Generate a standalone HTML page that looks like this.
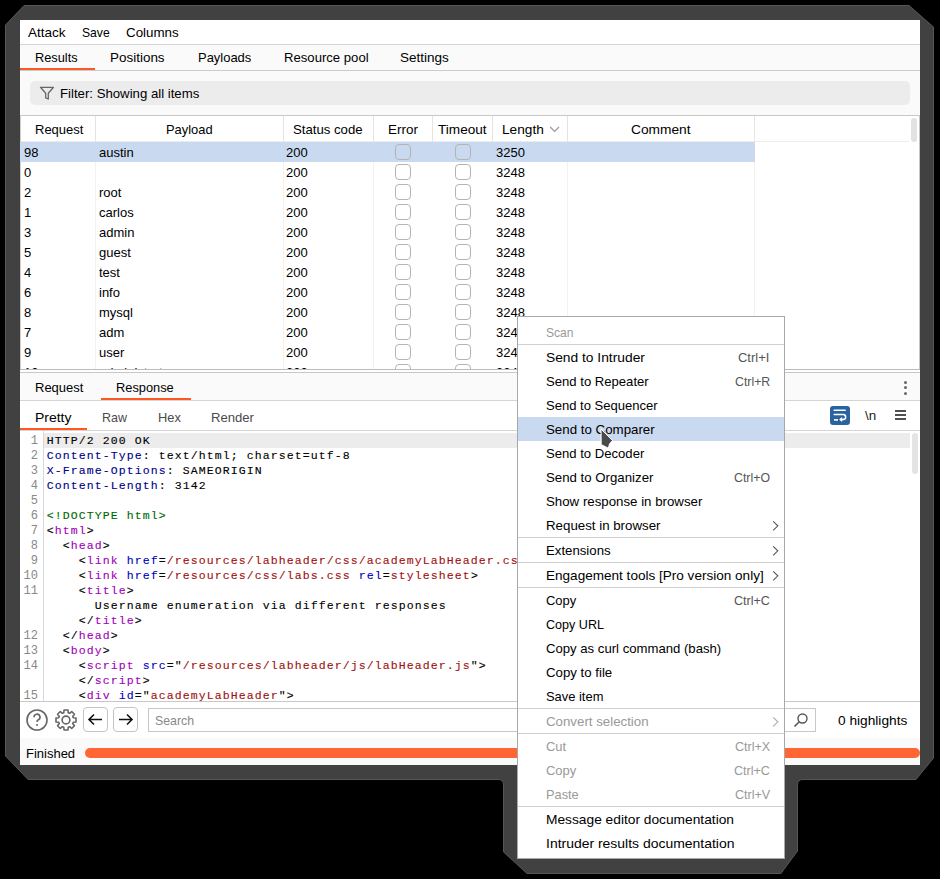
<!DOCTYPE html><html><head><meta charset="utf-8"><style>
*{margin:0;padding:0;box-sizing:border-box}
html,body{width:940px;height:879px;overflow:hidden;background:#000}
body{position:relative;font-family:"Liberation Sans", sans-serif;font-size:13px}
.t{position:absolute;white-space:pre;line-height:16px;font-family:"Liberation Sans", sans-serif;font-size:13px}
.r{position:absolute}
.code{position:absolute;margin-top:0px;left:46.7px;font-family:"Liberation Mono", monospace;font-size:11.5px;letter-spacing:1.1px;line-height:15px;white-space:pre;color:#000;-webkit-text-stroke:0.12px}
.ln{position:absolute;margin-top:1px;font-family:"Liberation Mono", monospace;font-size:12px;line-height:15px;color:#888;text-align:right;width:20px;left:18px;white-space:pre}
</style></head><body>
<svg style="position:absolute;left:0;top:0" width="940" height="879" viewBox="0 0 940 879"><path d="M5.5,25 L24,5.5 L909,5.5 L933.5,27 L933.5,758 L916,779.5 L803,779.5 Q797.5,779.5 797.5,785 L797.5,851 L781,873.5 L527,873.5 L503.5,852 L503.5,785 Q503.5,779.5 498,779.5 L28,779.5 L5.5,756 Z" fill="#414141" stroke="#565656" stroke-width="1"/></svg>
<div class="r" style="left:20px;top:20px;width:900px;height:745px;background:#fff;"></div>
<div class="t " style="left:28px;top:25.0px;color:#000;transform:scaleX(1.0408);transform-origin:0 0;">Attack</div>
<div class="t " style="left:82.3px;top:25.0px;color:#000;transform:scaleX(0.9345);transform-origin:0 0;">Save</div>
<div class="t " style="left:126.3px;top:25.0px;color:#000;transform:scaleX(1.0274);transform-origin:0 0;">Columns</div>
<div class="r" style="left:20px;top:44px;width:900px;height:1px;background:#d4d4d4;"></div>
<div class="r" style="left:20px;top:45px;width:900px;height:25px;background:#fafafa;"></div>
<div class="t " style="left:35.3px;top:50.0px;color:#000;transform:scaleX(0.9825);transform-origin:0 0;">Results</div>
<div class="t " style="left:110.4px;top:50.0px;color:#000;transform:scaleX(1.0351);transform-origin:0 0;">Positions</div>
<div class="t " style="left:197.6px;top:50.0px;color:#000;transform:scaleX(0.9966);transform-origin:0 0;">Payloads</div>
<div class="t " style="left:283.7px;top:50.0px;color:#000;transform:scaleX(1.0092);transform-origin:0 0;">Resource pool</div>
<div class="t " style="left:400.2px;top:50.0px;color:#000;transform:scaleX(1.0386);transform-origin:0 0;">Settings</div>
<div class="r" style="left:20px;top:68px;width:75px;height:2px;background:#ff5722;"></div>
<div class="r" style="left:20px;top:70px;width:900px;height:1px;background:#c8cccc;"></div>
<div class="r" style="left:20px;top:71px;width:900px;height:44px;background:#fafafa;"></div>
<div class="r" style="left:30px;top:81px;width:880px;height:24px;background:#ececec;border-radius:5px;"></div>
<svg style="position:absolute;left:39px;top:85px" width="16" height="16" viewBox="0 0 16 16"><path d="M1.5 2.3 H14.5 L9.3 8.3 V14 L6.7 12.8 V8.3 Z" fill="none" stroke="#666" stroke-width="1.3" stroke-linejoin="round"/></svg>
<div class="t " style="left:59.7px;top:86.0px;color:#000;transform:scaleX(1.0147);transform-origin:0 0;">Filter: Showing all items</div>
<div class="r" style="left:20px;top:115px;width:900px;height:1px;background:#c8c8c8;"></div>
<div class="r" style="left:20px;top:116px;width:891px;height:253px;background:#fff;"></div>
<div class="r" style="left:95px;top:116px;width:1px;height:26px;background:#e4e4e4;"></div>
<div class="r" style="left:283px;top:116px;width:1px;height:26px;background:#e4e4e4;"></div>
<div class="r" style="left:373px;top:116px;width:1px;height:26px;background:#e4e4e4;"></div>
<div class="r" style="left:432px;top:116px;width:1px;height:26px;background:#e4e4e4;"></div>
<div class="r" style="left:492px;top:116px;width:1px;height:26px;background:#e4e4e4;"></div>
<div class="r" style="left:567px;top:116px;width:1px;height:26px;background:#e4e4e4;"></div>
<div class="r" style="left:754px;top:116px;width:1px;height:26px;background:#e4e4e4;"></div>
<div class="t " style="left:35px;top:122.0px;color:#000;transform:scaleX(0.9995);transform-origin:0 0;">Request</div>
<div class="t " style="left:165.6px;top:122.0px;color:#000;transform:scaleX(0.9918);transform-origin:0 0;">Payload</div>
<div class="t " style="left:293.3px;top:122.0px;color:#000;transform:scaleX(1.0137);transform-origin:0 0;">Status code</div>
<div class="t " style="left:388px;top:122.0px;color:#000;transform:scaleX(1.0349);transform-origin:0 0;">Error</div>
<div class="t " style="left:438.4px;top:122.0px;color:#000;transform:scaleX(1.0455);transform-origin:0 0;">Timeout</div>
<div class="t " style="left:502.4px;top:122.0px;color:#000;transform:scaleX(1.0512);transform-origin:0 0;">Length</div>
<div class="t " style="left:630.9px;top:122.0px;color:#000;transform:scaleX(1.0575);transform-origin:0 0;">Comment</div>
<svg style="position:absolute;left:549px;top:125px" width="11" height="9" viewBox="0 0 11 9"><path d="M1.2 2 L5.6 6.5 L10 2" fill="none" stroke="#999" stroke-width="1.2"/></svg>
<div class="r" style="left:20px;top:141px;width:889px;height:1px;background:#ececec;"></div>
<div class="r" style="left:20px;top:116px;width:1px;height:253px;background:#d0cccc;"></div>
<div class="r" style="left:911px;top:118px;width:6px;height:24px;background:#e2e2e2;border-radius:3px;"></div>
<div class="r" style="left:919px;top:116px;width:1px;height:253px;background:#c8c4c4;"></div>
<div style="position:absolute;left:20px;top:142px;width:891px;height:227px;overflow:hidden">
<div class="r" style="left:75px;top:0;width:1px;height:227px;background:#f2f2f2"></div>
<div class="r" style="left:263px;top:0;width:1px;height:227px;background:#f2f2f2"></div>
<div class="r" style="left:353px;top:0;width:1px;height:227px;background:#f2f2f2"></div>
<div class="r" style="left:547px;top:0;width:1px;height:227px;background:#f2f2f2"></div>
<div class="r" style="left:734px;top:0;width:1px;height:227px;background:#f2f2f2"></div>
<div class="r" style="left:0;top:0;width:735px;height:20px;background:#c9d9ef"></div>
<div class="t" style="left:4px;top:3px">98</div>
<div class="t" style="left:79px;top:3px">austin</div>
<div class="t" style="left:266px;top:3px">200</div>
<div class="t" style="left:476px;top:3px">3250</div>
<div class="r" style="left:375px;top:2px;width:16px;height:16px;border:1px solid #b4b4b4;border-radius:4px;background:transparent"></div>
<div class="r" style="left:435px;top:2px;width:16px;height:16px;border:1px solid #b4b4b4;border-radius:4px;background:transparent"></div>
<div class="t" style="left:4px;top:23px">0</div>
<div class="t" style="left:79px;top:23px"></div>
<div class="t" style="left:266px;top:23px">200</div>
<div class="t" style="left:476px;top:23px">3248</div>
<div class="r" style="left:375px;top:22px;width:16px;height:16px;border:1px solid #b4b4b4;border-radius:4px;background:transparent"></div>
<div class="r" style="left:435px;top:22px;width:16px;height:16px;border:1px solid #b4b4b4;border-radius:4px;background:transparent"></div>
<div class="t" style="left:4px;top:43px">2</div>
<div class="t" style="left:79px;top:43px">root</div>
<div class="t" style="left:266px;top:43px">200</div>
<div class="t" style="left:476px;top:43px">3248</div>
<div class="r" style="left:375px;top:42px;width:16px;height:16px;border:1px solid #b4b4b4;border-radius:4px;background:transparent"></div>
<div class="r" style="left:435px;top:42px;width:16px;height:16px;border:1px solid #b4b4b4;border-radius:4px;background:transparent"></div>
<div class="t" style="left:4px;top:63px">1</div>
<div class="t" style="left:79px;top:63px">carlos</div>
<div class="t" style="left:266px;top:63px">200</div>
<div class="t" style="left:476px;top:63px">3248</div>
<div class="r" style="left:375px;top:62px;width:16px;height:16px;border:1px solid #b4b4b4;border-radius:4px;background:transparent"></div>
<div class="r" style="left:435px;top:62px;width:16px;height:16px;border:1px solid #b4b4b4;border-radius:4px;background:transparent"></div>
<div class="t" style="left:4px;top:83px">3</div>
<div class="t" style="left:79px;top:83px">admin</div>
<div class="t" style="left:266px;top:83px">200</div>
<div class="t" style="left:476px;top:83px">3248</div>
<div class="r" style="left:375px;top:82px;width:16px;height:16px;border:1px solid #b4b4b4;border-radius:4px;background:transparent"></div>
<div class="r" style="left:435px;top:82px;width:16px;height:16px;border:1px solid #b4b4b4;border-radius:4px;background:transparent"></div>
<div class="t" style="left:4px;top:103px">5</div>
<div class="t" style="left:79px;top:103px">guest</div>
<div class="t" style="left:266px;top:103px">200</div>
<div class="t" style="left:476px;top:103px">3248</div>
<div class="r" style="left:375px;top:102px;width:16px;height:16px;border:1px solid #b4b4b4;border-radius:4px;background:transparent"></div>
<div class="r" style="left:435px;top:102px;width:16px;height:16px;border:1px solid #b4b4b4;border-radius:4px;background:transparent"></div>
<div class="t" style="left:4px;top:123px">4</div>
<div class="t" style="left:79px;top:123px">test</div>
<div class="t" style="left:266px;top:123px">200</div>
<div class="t" style="left:476px;top:123px">3248</div>
<div class="r" style="left:375px;top:122px;width:16px;height:16px;border:1px solid #b4b4b4;border-radius:4px;background:transparent"></div>
<div class="r" style="left:435px;top:122px;width:16px;height:16px;border:1px solid #b4b4b4;border-radius:4px;background:transparent"></div>
<div class="t" style="left:4px;top:143px">6</div>
<div class="t" style="left:79px;top:143px">info</div>
<div class="t" style="left:266px;top:143px">200</div>
<div class="t" style="left:476px;top:143px">3248</div>
<div class="r" style="left:375px;top:142px;width:16px;height:16px;border:1px solid #b4b4b4;border-radius:4px;background:transparent"></div>
<div class="r" style="left:435px;top:142px;width:16px;height:16px;border:1px solid #b4b4b4;border-radius:4px;background:transparent"></div>
<div class="t" style="left:4px;top:163px">8</div>
<div class="t" style="left:79px;top:163px">mysql</div>
<div class="t" style="left:266px;top:163px">200</div>
<div class="t" style="left:476px;top:163px">3248</div>
<div class="r" style="left:375px;top:162px;width:16px;height:16px;border:1px solid #b4b4b4;border-radius:4px;background:transparent"></div>
<div class="r" style="left:435px;top:162px;width:16px;height:16px;border:1px solid #b4b4b4;border-radius:4px;background:transparent"></div>
<div class="t" style="left:4px;top:183px">7</div>
<div class="t" style="left:79px;top:183px">adm</div>
<div class="t" style="left:266px;top:183px">200</div>
<div class="t" style="left:476px;top:183px">3248</div>
<div class="r" style="left:375px;top:182px;width:16px;height:16px;border:1px solid #b4b4b4;border-radius:4px;background:transparent"></div>
<div class="r" style="left:435px;top:182px;width:16px;height:16px;border:1px solid #b4b4b4;border-radius:4px;background:transparent"></div>
<div class="t" style="left:4px;top:203px">9</div>
<div class="t" style="left:79px;top:203px">user</div>
<div class="t" style="left:266px;top:203px">200</div>
<div class="t" style="left:476px;top:203px">3248</div>
<div class="r" style="left:375px;top:202px;width:16px;height:16px;border:1px solid #b4b4b4;border-radius:4px;background:transparent"></div>
<div class="r" style="left:435px;top:202px;width:16px;height:16px;border:1px solid #b4b4b4;border-radius:4px;background:transparent"></div>
<div class="t" style="left:4px;top:223px">10</div>
<div class="t" style="left:79px;top:223px">administrator</div>
<div class="t" style="left:266px;top:223px">200</div>
<div class="t" style="left:476px;top:223px">3248</div>
<div class="r" style="left:375px;top:222px;width:16px;height:16px;border:1px solid #b4b4b4;border-radius:4px;background:transparent"></div>
<div class="r" style="left:435px;top:222px;width:16px;height:16px;border:1px solid #b4b4b4;border-radius:4px;background:transparent"></div>
</div>
<div class="r" style="left:20px;top:369px;width:900px;height:1px;background:#bbb;"></div>
<div class="r" style="left:20px;top:370px;width:900px;height:2px;background:#fff;"></div>
<div class="r" style="left:20px;top:372px;width:900px;height:1px;background:#c8c8c8;"></div>
<div class="r" style="left:20px;top:373px;width:900px;height:27px;background:#fafafa;"></div>
<div class="t " style="left:35.2px;top:380.0px;color:#000;transform:scaleX(0.9995);transform-origin:0 0;">Request</div>
<div class="t " style="left:116.3px;top:380.0px;color:#000;transform:scaleX(0.9855);transform-origin:0 0;">Response</div>
<div class="r" style="left:101px;top:398px;width:90px;height:2px;background:#ff5722;"></div>
<div class="r" style="left:20px;top:400px;width:900px;height:1px;background:#d4d4d4;"></div>
<div class="r" style="left:904px;top:381px;width:3px;height:3px;background:#666;border-radius:50%;"></div>
<div class="r" style="left:904px;top:386px;width:3px;height:3px;background:#666;border-radius:50%;"></div>
<div class="r" style="left:904px;top:392px;width:3px;height:3px;background:#666;border-radius:50%;"></div>
<div class="t " style="left:35.2px;top:410.0px;color:#000;transform:scaleX(1.0745);transform-origin:0 0;">Pretty</div>
<div class="t " style="left:102.4px;top:410.0px;color:#4a4a4a;transform:scaleX(0.9571);transform-origin:0 0;">Raw</div>
<div class="t " style="left:157.5px;top:410.0px;color:#4a4a4a;transform:scaleX(0.9903);transform-origin:0 0;">Hex</div>
<div class="t " style="left:211.4px;top:410.0px;color:#4a4a4a;transform:scaleX(1.0061);transform-origin:0 0;">Render</div>
<div class="r" style="left:20px;top:428px;width:67px;height:2px;background:#ff5722;"></div>
<div class="r" style="left:20px;top:430px;width:900px;height:1px;background:#d4d4d4;"></div>
<div class="r" style="left:830px;top:406px;width:20px;height:19px;background:#2a64a0;border-radius:3px"></div>
<svg style="position:absolute;left:830px;top:406px" width="20" height="19" viewBox="0 0 20 19"><path d="M4.2 4.3 H15.2" stroke="#fff" stroke-width="1.6" stroke-linecap="round"/><path d="M4.2 8.6 H13.2 A2.45 2.45 0 0 1 13.2 13.5 H10.8" fill="none" stroke="#fff" stroke-width="1.5" stroke-linecap="round"/><path d="M12.2 11.7 L10.2 13.5 L12.2 15.3" fill="none" stroke="#fff" stroke-width="1.4"/><path d="M4 13.9 H8" stroke="#fff" stroke-width="1.6"/></svg>
<div class="t " style="left:864.7px;top:408.0px;color:#222;transform:scaleX(1.0329);transform-origin:0 0;">\n</div>
<div class="r" style="left:895px;top:410px;width:11px;height:2px;background:#505050;"></div>
<div class="r" style="left:895px;top:414px;width:11px;height:2px;background:#505050;"></div>
<div class="r" style="left:895px;top:418px;width:11px;height:2px;background:#505050;"></div>
<div class="r" style="left:20px;top:431px;width:900px;height:271px;background:#fff;"></div>
<div class="r" style="left:43px;top:431px;width:1px;height:271px;background:#d8d8d8;"></div>
<div class="r" style="left:44px;top:433px;width:866px;height:15px;background:#ececec;"></div>
<div class="r" style="left:912px;top:433px;width:6px;height:41px;background:#e4e4e4;border-radius:3px;"></div>
<div style="position:absolute;left:0;top:433px;width:910px;height:268px;overflow:hidden">
<div class="ln" style="top:0px">1</div>
<div class="code" style="top:0px"><span style="color:#000">HTTP/2 200 OK</span></div>
<div class="ln" style="top:15px">2</div>
<div class="code" style="top:15px"><span style="color:#00008a">Content-Type</span><span style="color:#000">: text/html; charset=utf-8</span></div>
<div class="ln" style="top:30px">3</div>
<div class="code" style="top:30px"><span style="color:#00008a">X-Frame-Options</span><span style="color:#000">: SAMEORIGIN</span></div>
<div class="ln" style="top:45px">4</div>
<div class="code" style="top:45px"><span style="color:#00008a">Content-Length</span><span style="color:#000">: 3142</span></div>
<div class="ln" style="top:60px">5</div>
<div class="code" style="top:60px"></div>
<div class="ln" style="top:75px">6</div>
<div class="code" style="top:75px"><span style="color:#006a00">&lt;!DOCTYPE html&gt;</span></div>
<div class="ln" style="top:90px">7</div>
<div class="code" style="top:90px"><span style="color:#000">&lt;</span><span style="color:#a000b8">html</span><span style="color:#000">&gt;</span></div>
<div class="ln" style="top:105px">8</div>
<div class="code" style="top:105px">  <span style="color:#000">&lt;</span><span style="color:#a000b8">head</span><span style="color:#000">&gt;</span></div>
<div class="ln" style="top:120px">9</div>
<div class="code" style="top:120px">    <span style="color:#000">&lt;</span><span style="color:#a000b8">link</span> <span style="color:#0000c0">href</span><span style="color:#000">=</span><span style="color:#a01010">/resources/labheader/css/academyLabHeader.css</span> <span style="color:#0000c0">rel</span><span style="color:#000">=</span><span style="color:#a01010">stylesheet</span><span style="color:#000">&gt;</span></div>
<div class="ln" style="top:135px">10</div>
<div class="code" style="top:135px">    <span style="color:#000">&lt;</span><span style="color:#a000b8">link</span> <span style="color:#0000c0">href</span><span style="color:#000">=</span><span style="color:#a01010">/resources/css/labs.css</span> <span style="color:#0000c0">rel</span><span style="color:#000">=</span><span style="color:#a01010">stylesheet</span><span style="color:#000">&gt;</span></div>
<div class="ln" style="top:150px">11</div>
<div class="code" style="top:150px">    <span style="color:#000">&lt;</span><span style="color:#a000b8">title</span><span style="color:#000">&gt;</span></div>
<div class="code" style="top:165px">      <span style="color:#000">Username enumeration via different responses</span></div>
<div class="code" style="top:180px">    <span style="color:#000">&lt;/</span><span style="color:#a000b8">title</span><span style="color:#000">&gt;</span></div>
<div class="ln" style="top:195px">12</div>
<div class="code" style="top:195px">  <span style="color:#000">&lt;/</span><span style="color:#a000b8">head</span><span style="color:#000">&gt;</span></div>
<div class="ln" style="top:210px">13</div>
<div class="code" style="top:210px">  <span style="color:#000">&lt;</span><span style="color:#a000b8">body</span><span style="color:#000">&gt;</span></div>
<div class="ln" style="top:225px">14</div>
<div class="code" style="top:225px">    <span style="color:#000">&lt;</span><span style="color:#a000b8">script</span> <span style="color:#0000c0">src</span><span style="color:#000">="</span><span style="color:#a01010">/resources/labheader/js/labHeader.js</span><span style="color:#000">"&gt;</span></div>
<div class="code" style="top:240px">    <span style="color:#000">&lt;/</span><span style="color:#a000b8">script</span><span style="color:#000">&gt;</span></div>
<div class="ln" style="top:255px">15</div>
<div class="code" style="top:255px">    <span style="color:#000">&lt;</span><span style="color:#a000b8">div</span> <span style="color:#0000c0">id</span><span style="color:#000">="</span><span style="color:#a01010">academyLabHeader</span><span style="color:#000">"&gt;</span></div>
</div>
<div class="r" style="left:20px;top:701px;width:900px;height:1px;background:#c8c8c8;"></div>
<svg style="position:absolute;left:25px;top:708px" width="24" height="24" viewBox="0 0 24 24"><circle cx="12" cy="12" r="10" fill="none" stroke="#666" stroke-width="1.6"/><path d="M9 9.3 A3 3 0 1 1 13 12 C12.2 12.5 12 13 12 14" fill="none" stroke="#666" stroke-width="1.6"/><circle cx="12" cy="17" r="1" fill="#666"/></svg>
<svg style="position:absolute;left:54px;top:708px" width="24" height="24" viewBox="0 0 24 24"><path d="M9.78 4.73 L10.05 1.99 L13.95 1.99 L14.22 4.73 L15.57 5.29 L17.70 3.54 L20.46 6.30 L18.71 8.43 L19.27 9.78 L22.01 10.05 L22.01 13.95 L19.27 14.22 L18.71 15.57 L20.46 17.70 L17.70 20.46 L15.57 18.71 L14.22 19.27 L13.95 22.01 L10.05 22.01 L9.78 19.27 L8.43 18.71 L6.30 20.46 L3.54 17.70 L5.29 15.57 L4.73 14.22 L1.99 13.95 L1.99 10.05 L4.73 9.78 L5.29 8.43 L3.54 6.30 L6.30 3.54 L8.43 5.29 Z" fill="none" stroke="#666" stroke-width="1.6" stroke-linejoin="round"/><circle cx="12" cy="12" r="3.9" fill="none" stroke="#666" stroke-width="1.6"/></svg>
<div class="r" style="left:83px;top:707px;width:25px;height:25px;border:1px solid #c4c4c4;border-radius:4px"></div>
<div class="r" style="left:113px;top:707px;width:25px;height:25px;border:1px solid #c4c4c4;border-radius:4px"></div>
<svg style="position:absolute;left:83px;top:707px" width="25" height="25" viewBox="0 0 25 25"><path d="M19 12.5 H6 M11 7.5 L6 12.5 L11 17.5" fill="none" stroke="#111" stroke-width="1.6"/></svg>
<svg style="position:absolute;left:113px;top:707px" width="25" height="25" viewBox="0 0 25 25"><path d="M6 12.5 H19 M14 7.5 L19 12.5 L14 17.5" fill="none" stroke="#111" stroke-width="1.6"/></svg>
<div class="r" style="left:148px;top:708px;width:668px;height:24px;border:1px solid #c8c8c8;background:#fff"></div>
<div class="t " style="left:155.3px;top:713.0px;color:#888;transform:scaleX(0.9465);transform-origin:0 0;">Search</div>
<svg style="position:absolute;left:792px;top:711px" width="18" height="18" viewBox="0 0 18 18"><circle cx="10.5" cy="7.5" r="4.5" fill="none" stroke="#555" stroke-width="1.4"/><path d="M7.3 10.7 L2.5 15.5" stroke="#555" stroke-width="1.6"/></svg>
<div class="t " style="left:838.4px;top:713.0px;color:#000;transform:scaleX(1.0535);transform-origin:0 0;">0 highlights</div>
<div class="r" style="left:20px;top:738px;width:900px;height:27px;background:#fafafa;"></div>
<div class="t " style="left:25.5px;top:746.0px;color:#000;transform:scaleX(0.9992);transform-origin:0 0;">Finished</div>
<div class="r" style="left:85px;top:748px;width:835px;height:10px;background:#ff6633;border-radius:5px;"></div>
<div class="r" style="left:517px;top:316px;width:268px;height:543px;background:#fff;border:1px solid #a8a8a8"></div>
<div class="t " style="left:546.3px;top:325.0px;color:#999;transform:scaleX(0.9244);transform-origin:0 0;">Scan</div>
<div class="r" style="left:518px;top:344px;width:266px;height:1px;background:#d0d0d0;"></div>
<div class="t " style="left:546.3px;top:350.0px;color:#000;transform:scaleX(1.0608);transform-origin:0 0;">Send to Intruder</div>
<div class="t " style="left:738.4000000000001px;top:350.0px;color:#555;transform:scaleX(0.9961);transform-origin:0 0;">Ctrl+I</div>
<div class="t " style="left:546.3px;top:374.0px;color:#000;transform:scaleX(1.0078);transform-origin:0 0;">Send to Repeater</div>
<div class="t " style="left:734.5px;top:374.0px;color:#555;transform:scaleX(0.9462);transform-origin:0 0;">Ctrl+R</div>
<div class="t " style="left:546.3px;top:398.0px;color:#000;transform:scaleX(1.0035);transform-origin:0 0;">Send to Sequencer</div>
<div class="r" style="left:518px;top:417px;width:266px;height:24px;background:#c9d9ef;"></div>
<div class="t " style="left:546.3px;top:422.0px;color:#000;transform:scaleX(1.0232);transform-origin:0 0;">Send to Comparer</div>
<div class="t " style="left:546.3px;top:446.0px;color:#000;transform:scaleX(1.0074);transform-origin:0 0;">Send to Decoder</div>
<div class="t " style="left:546.3px;top:470.0px;color:#000;transform:scaleX(1.0179);transform-origin:0 0;">Send to Organizer</div>
<div class="t " style="left:733.7px;top:470.0px;color:#555;transform:scaleX(0.9493);transform-origin:0 0;">Ctrl+O</div>
<div class="t " style="left:546.3px;top:494.0px;color:#000;transform:scaleX(1.0209);transform-origin:0 0;">Show response in browser</div>
<div class="t " style="left:546.3px;top:518.0px;color:#000;transform:scaleX(1.0223);transform-origin:0 0;">Request in browser</div>
<svg style="position:absolute;left:772px;top:520px" width="8" height="12" viewBox="0 0 8 12"><path d="M1.2 1.3 L5.8 5.8 L1.2 10.3" fill="none" stroke="#555" stroke-width="1.1"/></svg>
<div class="r" style="left:518px;top:537px;width:266px;height:1px;background:#d0d0d0;"></div>
<div class="t " style="left:546.3px;top:543.0px;color:#000;transform:scaleX(1.0158);transform-origin:0 0;">Extensions</div>
<svg style="position:absolute;left:772px;top:545px" width="8" height="12" viewBox="0 0 8 12"><path d="M1.2 1.3 L5.8 5.8 L1.2 10.3" fill="none" stroke="#555" stroke-width="1.1"/></svg>
<div class="r" style="left:518px;top:562px;width:266px;height:1px;background:#d0d0d0;"></div>
<div class="t " style="left:546.3px;top:568.0px;color:#000;transform:scaleX(1.0424);transform-origin:0 0;">Engagement tools [Pro version only]</div>
<svg style="position:absolute;left:772px;top:570px" width="8" height="12" viewBox="0 0 8 12"><path d="M1.2 1.3 L5.8 5.8 L1.2 10.3" fill="none" stroke="#555" stroke-width="1.1"/></svg>
<div class="r" style="left:518px;top:587px;width:266px;height:1px;background:#d0d0d0;"></div>
<div class="t " style="left:546.3px;top:593.0px;color:#000;transform:scaleX(0.9980);transform-origin:0 0;">Copy</div>
<div class="t " style="left:733.8000000000001px;top:593.0px;color:#555;transform:scaleX(0.9650);transform-origin:0 0;">Ctrl+C</div>
<div class="t " style="left:546.3px;top:617.0px;color:#000;transform:scaleX(0.9672);transform-origin:0 0;">Copy URL</div>
<div class="t " style="left:546.3px;top:641.0px;color:#000;transform:scaleX(1.0103);transform-origin:0 0;">Copy as curl command (bash)</div>
<div class="t " style="left:546.3px;top:665.0px;color:#000;transform:scaleX(1.0177);transform-origin:0 0;">Copy to file</div>
<div class="t " style="left:546.3px;top:689.0px;color:#000;transform:scaleX(0.9929);transform-origin:0 0;">Save item</div>
<div class="r" style="left:518px;top:708px;width:266px;height:1px;background:#d0d0d0;"></div>
<div class="t " style="left:546.3px;top:714.0px;color:#999;transform:scaleX(1.0214);transform-origin:0 0;">Convert selection</div>
<svg style="position:absolute;left:772px;top:716px" width="8" height="12" viewBox="0 0 8 12"><path d="M1.2 1.3 L5.8 5.8 L1.2 10.3" fill="none" stroke="#aaa" stroke-width="1.1"/></svg>
<div class="r" style="left:518px;top:733px;width:266px;height:1px;background:#d0d0d0;"></div>
<div class="t " style="left:546.3px;top:739.0px;color:#999;transform:scaleX(0.9983);transform-origin:0 0;">Cut</div>
<div class="t " style="left:734.5px;top:739.0px;color:#999;transform:scaleX(0.9648);transform-origin:0 0;">Ctrl+X</div>
<div class="t " style="left:546.3px;top:763.0px;color:#999;transform:scaleX(0.9980);transform-origin:0 0;">Copy</div>
<div class="t " style="left:733.8000000000001px;top:763.0px;color:#999;transform:scaleX(0.9650);transform-origin:0 0;">Ctrl+C</div>
<div class="t " style="left:546.3px;top:787.0px;color:#999;transform:scaleX(0.9835);transform-origin:0 0;">Paste</div>
<div class="t " style="left:734.5px;top:787.0px;color:#999;transform:scaleX(0.9648);transform-origin:0 0;">Ctrl+V</div>
<div class="r" style="left:518px;top:806px;width:266px;height:1px;background:#d0d0d0;"></div>
<div class="t " style="left:546.3px;top:812.0px;color:#000;transform:scaleX(1.0575);transform-origin:0 0;">Message editor documentation</div>
<div class="t " style="left:546.3px;top:836.0px;color:#000;transform:scaleX(1.0734);transform-origin:0 0;">Intruder results documentation</div>
<svg style="position:absolute;left:598px;top:426px" width="18" height="26" viewBox="0 0 18 26"><path d="M3 3 L3.2 18.6 L10.3 22.2 L11.6 17.8 L14.5 14.6 Z" fill="#4a4a4a" stroke="#fff" stroke-width="1" stroke-linejoin="round"/></svg>
</body></html>
